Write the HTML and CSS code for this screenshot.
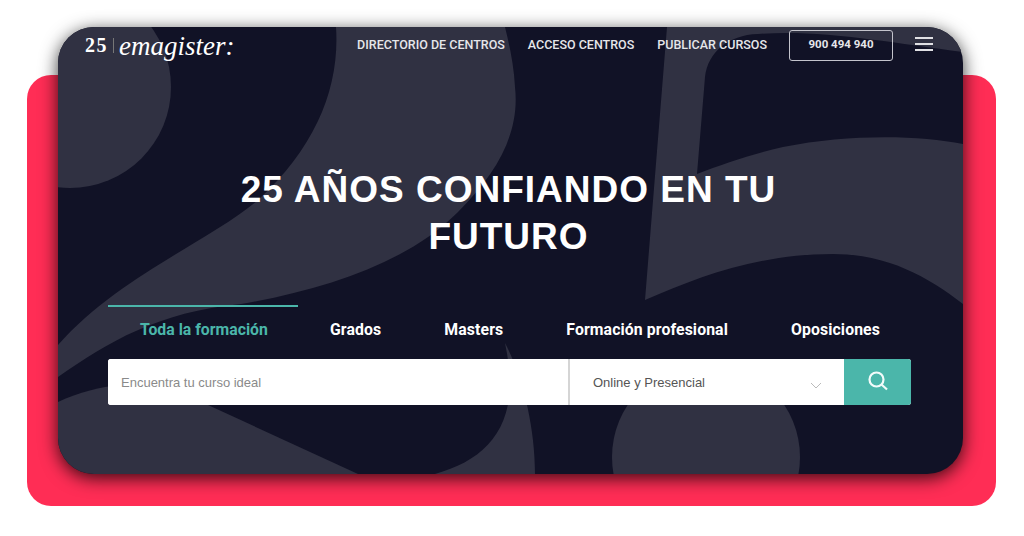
FILE: index.html
```html
<!DOCTYPE html>
<html lang="es">
<head>
  <meta charset="UTF-8">
  <meta name="viewport" content="width=device-width, initial-scale=1.0">
  <title>emagister</title>
  <link rel="stylesheet" href="styles.css">
</head>
<body>
  <div class="stage">
    <div class="backdrop"></div>

    <div class="card">
      <!-- big "25" behind the hero -->
      <svg class="digits" viewBox="0 0 905 447" aria-hidden="true">
        <circle cx="12" cy="60" r="101"/>
        <path d="M278,0 C282,60 258,120 200,173 C150,215 60,250 0,318 L0,350 C50,315 100,285 183,277 C270,262 350,235 400,185 C440,145 462,105 457,60 C456,40 452,20 447,0 Z"/>
        <path d="M0,375 C20,365 45,360 60,358 C90,360 120,365 150,378 L300,447 L0,447 Z"/>
        <path d="M447,316 C465,350 477,400 477,447 L377,447 C420,435 450,410 452,360 C452,345 450,330 447,316 Z"/>
        <circle cx="648" cy="430" r="94"/>
        <path d="M609,0 L587,273 C640,250 700,227 775,227 C830,227 870,250 905,277 L905,117 C860,108 790,107 725,120 C695,127 665,137 639,147 L647,50 C650,25 670,8 700,7 C760,2 830,15 905,25 L905,0 Z"/>
      </svg>

      <header class="header">
        <a class="logo" href="#">
          <span class="logo-25">25</span>
          <span class="logo-bar"></span>
          <span class="logo-name">emagister:</span>
        </a>
        <nav class="nav">
          <a href="#">DIRECTORIO DE CENTROS</a>
          <a href="#">ACCESO CENTROS</a>
          <a href="#">PUBLICAR CURSOS</a>
        </nav>
        <a class="phone" href="#">900 494 940</a>
        <button class="burger" aria-label="Menu"><span></span><span></span><span></span></button>
      </header>

      <h1 class="title">25 AÑOS CONFIANDO EN TU<br>FUTURO</h1>

      <div class="finder">
        <div class="tabs">
          <a class="tab active" href="#">Toda la formación</a>
          <a class="tab" href="#">Grados</a>
          <a class="tab" href="#">Masters</a>
          <a class="tab" href="#">Formación profesional</a>
          <a class="tab" href="#">Oposiciones</a>
        </div>
        <form class="search">
          <input class="search-input" type="text" placeholder="Encuentra tu curso ideal">
          <div class="search-select">
            <span>Online y Presencial</span>
            <svg class="chevron" width="12" height="7" viewBox="0 0 12 7"><path d="M1,1 L6,6 L11,1"/></svg>
          </div>
          <button class="search-button" type="button" aria-label="Buscar">
            <svg width="22" height="22" viewBox="0 0 22 22"><circle cx="9.5" cy="9.5" r="7"/><path d="M14.5,14.5 L20,19.5"/></svg>
          </button>
        </form>
      </div>
    </div>
  </div>
</body>
</html>
```

FILE: styles.css
```css
* {
  box-sizing: border-box;
}

body {
  margin: 0;
  background: white;
  font-family: "Liberation Sans", Arial, sans-serif;
}

a {
  color: inherit;
  text-decoration: none;
}

.stage {
  position: relative;
  width: 1024px;
  height: 536px;
  padding: 27px 61px 0 58px;
  overflow: hidden;
}

.backdrop {
  position: absolute;
  left: 27px;
  top: 75px;
  width: 969px;
  height: 431px;
  background: #ff2d55;
  border-radius: 24px;
}

.card {
  position: relative;
  height: 447px;
  background: #111226;
  border-radius: 36px;
  box-shadow: 0 4px 18px rgba(0,0,0,0.8);
  overflow: hidden;
}

.digits {
  position: absolute;
  left: 0;
  top: 0;
  width: 905px;
  height: 447px;
  fill: #303142;
}

.header {
  position: relative;
  display: flex;
  align-items: center;
  height: 31px;
  margin-top: 3px;
  padding: 0 30px 0 27px;
  color: #e6e6ea;
}

.logo {
  display: flex;
  align-items: center;
  color: white;
  margin-right: auto;
}

.logo-25 {
  font-family: "Liberation Serif", serif;
  font-size: 20px;
  font-weight: bold;
  letter-spacing: 1.5px;
}

.logo-bar {
  width: 1px;
  height: 15px;
  margin: 0 5px 0 5px;
  background: #777;
}

.logo-name {
  font-family: "Liberation Serif", serif;
  font-size: 27px;
  font-style: italic;
  line-height: 30px;
}

.nav {
  display: flex;
  gap: 23px;
  margin-bottom: 3px;
  font-family: Roboto, sans-serif;
  font-size: 12.5px;
  font-weight: 500;
}

.phone {
  width: 104px;
  height: 31px;
  margin-left: 22px;
  border: 1px solid #c4c4cc;
  border-radius: 3px;
  font-family: Roboto, sans-serif;
  font-size: 11.5px;
  font-weight: 700;
  line-height: 27px;
  text-align: center;
}

.burger {
  display: flex;
  flex-direction: column;
  gap: 4px;
  width: 18px;
  margin: 0 0 3px 22px;
  padding: 0;
  border: none;
  background: none;
}

.burger span {
  height: 2px;
  background: #e0e0e4;
}

.title {
  position: relative;
  margin: 105px 4px 0 0;
  color: white;
  font-size: 37px;
  font-weight: bold;
  line-height: 47px;
  letter-spacing: 1px;
  text-align: center;
}

.finder {
  position: relative;
  margin: 45px 52px 0 50px;
}

.tabs {
  display: flex;
  justify-content: space-between;
  height: 54px;
}

.tab {
  padding: 13px 31px 0;
  border-top: 2.5px solid transparent;
  color: white;
  font-family: Roboto, sans-serif;
  font-size: 15.8px;
  font-weight: 700;
  line-height: 20px;
  letter-spacing: 0.1px;
  white-space: nowrap;
}

.tab.active {
  padding: 13px 30px 0 32px;
  color: #4bb6aa;
  border-top-color: #4bb6aa;
  letter-spacing: 0;
}

.search {
  display: flex;
  height: 46px;
  border-radius: 3px;
  background: white;
  overflow: hidden;
}

.search-input {
  flex: 1;
  min-width: 0;
  padding: 0 13px;
  border: none;
  border-right: 2px solid #d5d5d5;
  outline: none;
  font-family: "Liberation Sans", sans-serif;
  font-size: 13px;
}

.search-input::placeholder {
  color: #8a8a8a;
  opacity: 1;
}

.search-select {
  display: flex;
  align-items: center;
  width: 274px;
  padding: 0 22px 0 23px;
  color: #555;
  font-size: 13px;
}

.search-select span {
  margin-right: auto;
}

.chevron {
  margin-top: 7px;
  fill: none;
  stroke: #bbb;
  stroke-width: 1;
}

.search-button {
  display: flex;
  justify-content: center;
  padding: 11px 0 0;
  width: 67px;
  border: none;
  background: #4bb6aa;
}

.search-button svg {
  fill: none;
  stroke: #f2fbfa;
  stroke-width: 2.2;
}
```
